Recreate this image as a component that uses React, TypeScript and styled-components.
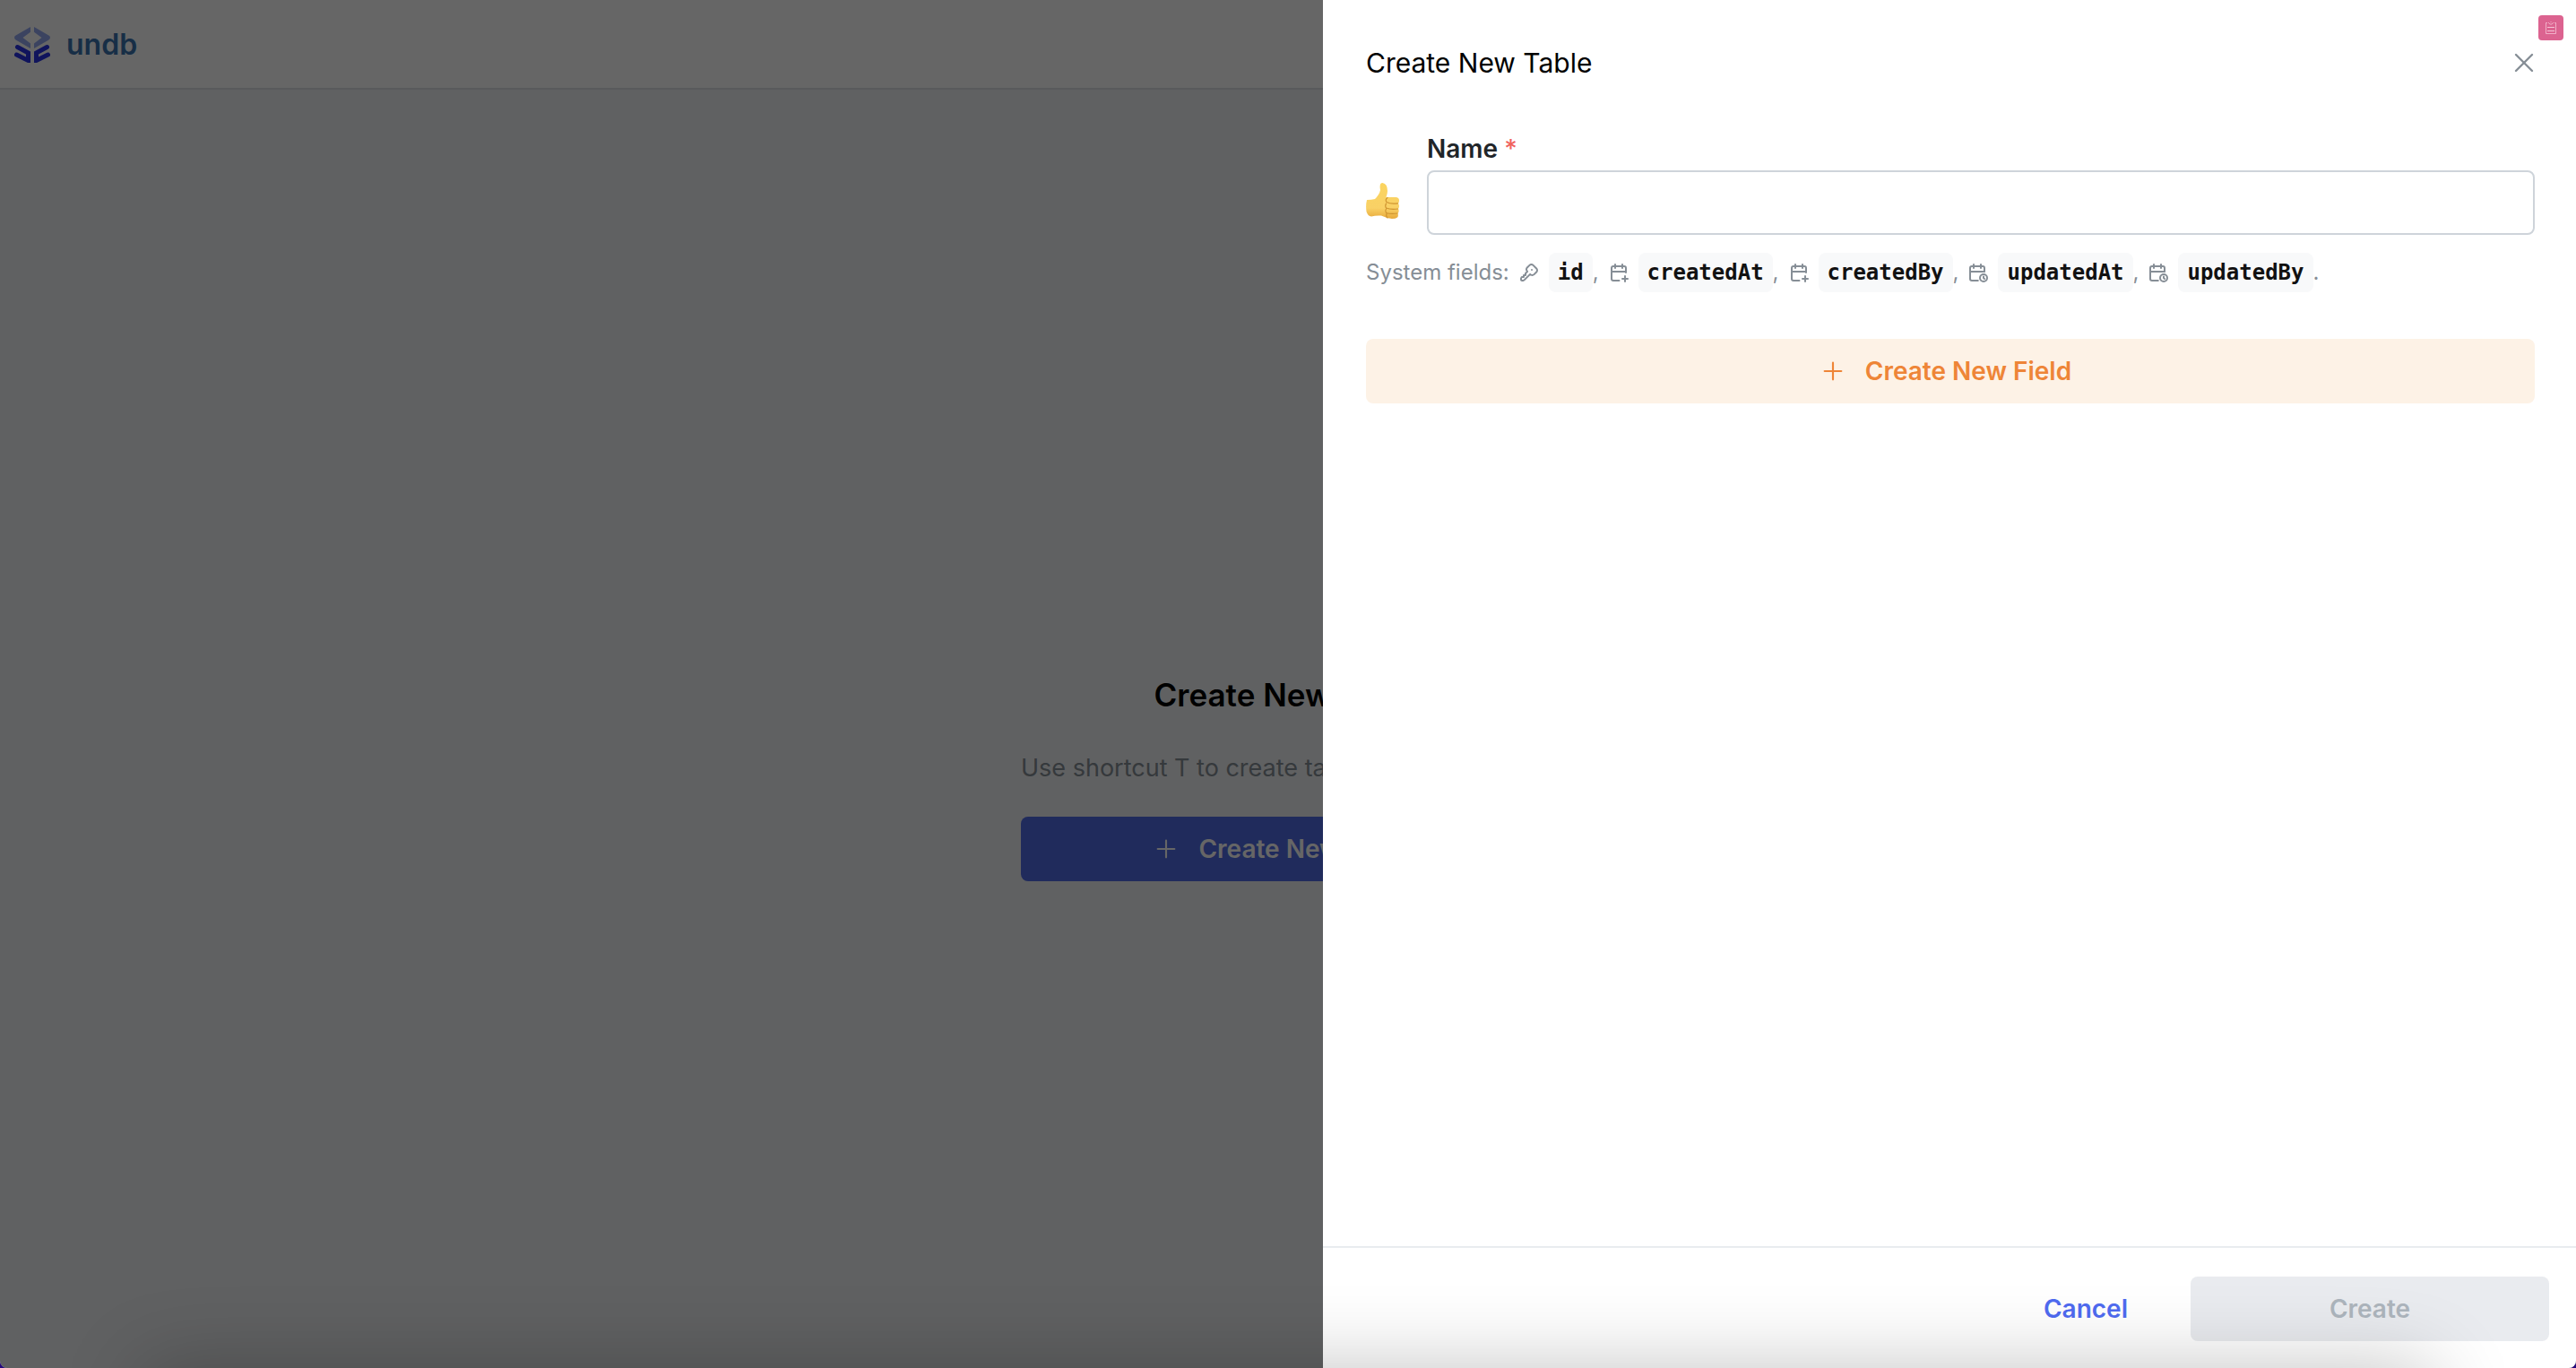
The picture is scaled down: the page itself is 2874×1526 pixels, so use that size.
import React, { useState } from "react";
import styled, { createGlobalStyle } from "styled-components";
import { TbCalendarPlus, TbCalendarTime, TbKey, TbPlus, TbX } from "react-icons/tb";

const GlobalStyle = createGlobalStyle`
  *, *::before, *::after { box-sizing: border-box; }
  body {
    margin: 0;
    background: #260a7c;
    font-family: Inter, "Liberation Sans", sans-serif;
    font-size: 28px;
    color: #000;
  }
`;

const Window = styled.div`
  position: relative;
  display: flex;
  min-height: 100vh;
  overflow: hidden;
  background: #f1f3f5;
  border-radius: 0 0 8px 8px;
`;

const Page = styled.div`
  flex: 1;
  display: flex;
  flex-direction: column;
`;

const TopBar = styled.header`
  display: flex;
  align-items: center;
  gap: 18px;
  height: 100px;
  padding: 2px 16px 0;
  background: #fff;
  border-bottom: 2px solid #dee2e6;
`;

const Brand = styled.span`
  font-size: 32px;
  font-weight: 600;
  line-height: 40px;
  color: #3b73b0;
`;

const Empty = styled.main`
  flex: 1;
  display: flex;
  flex-direction: column;
  align-items: center;
  justify-content: center;
  padding-top: 108px;
`;

const EmptyBox = styled.section`
  display: flex;
  flex-direction: column;
  gap: 32px;
  width: 596px;
`;

const EmptyTitle = styled.h2`
  margin: 0 0 4px;
  font-size: 35px;
  font-weight: 600;
  line-height: 48px;
  text-align: center;
`;

const EmptyText = styled.p`
  margin: 0;
  font-size: 27px;
  line-height: 44px;
  color: #868e96;
`;

const Button = styled.button<{ $bg: string; $fg: string; $width?: string; $icon?: boolean }>`
  display: flex;
  align-items: center;
  justify-content: center;
  gap: 20px;
  height: 72px;
  width: ${(p) => p.$width ?? "auto"};
  padding: ${(p) => (p.$icon ? "0 36px 0 24px" : "0 36px")};
  border: 0;
  border-radius: 8px;
  background: ${(p) => p.$bg};
  color: ${(p) => p.$fg};
  font: inherit;
  font-size: 28px;
  font-weight: 600;
  line-height: 40px;
  svg { width: 32px; height: 32px; stroke-width: 1.6; }
`;

const Overlay = styled.div`
  position: absolute;
  inset: 0;
  background: rgba(0, 0, 0, 0.6);
`;

const Drawer = styled.aside`
  position: absolute;
  top: 0;
  right: 0;
  bottom: 0;
  width: 1398px;
  max-width: 100%;
  display: flex;
  flex-direction: column;
  background: #fff;
`;

const DrawerHeader = styled.div`
  display: flex;
  align-items: center;
  justify-content: space-between;
  padding: 48px 40px 0 48px;
`;

const DrawerTitle = styled.h1`
  margin: 0;
  font-size: 30px;
  font-weight: 400;
  line-height: 44px;
`;

const CloseButton = styled.button`
  display: flex;
  padding: 0;
  border: 0;
  background: none;
  color: #868e96;
  svg { width: 36px; height: 36px; stroke-width: 1.6; }
`;

const Form = styled.form`
  flex: 1;
  display: flex;
  flex-direction: column;
`;

const Fields = styled.div`
  flex: 1;
  padding: 52px 46px 0 48px;
`;

const NameRow = styled.div`
  display: flex;
  align-items: flex-end;
  gap: 28px;
`;

const EmojiButton = styled.button`
  display: flex;
  align-items: center;
  height: 72px;
  padding: 0 0 4px;
  border: 0;
  background: none;
  svg { width: 40px; height: 44px; }
`;

const NameField = styled.div`
  flex: 1;
  display: flex;
  flex-direction: column;
  gap: 2px;
`;

const Label = styled.label`
  font-size: 28px;
  font-weight: 600;
  line-height: 44px;
  color: #212529;
`;

const Required = styled.span`
  color: #f0625d;
  font-weight: 500;
`;

const TextInput = styled.input`
  width: 100%;
  height: 72px;
  padding: 0 24px;
  border: 2px solid #ced4da;
  border-radius: 8px;
  background: #fff;
  font: inherit;
  outline: 0;
`;

const SystemFields = styled.div`
  display: flex;
  align-items: center;
  margin: 20px 0 52px;
  font-size: 24px;
  line-height: 44px;
  color: #868e96;
`;

const SystemField = styled.span`
  display: flex;
  align-items: center;
  padding-left: 10px;
  svg { width: 24px; height: 24px; margin-right: 10px; }
`;

const Code = styled.code`
  padding: 0 10px;
  border-radius: 8px;
  background: #f8f9fa;
  color: #111;
  font-family: "DejaVu Sans Mono", monospace;
  font-size: 24px;
  font-weight: 700;
`;

const Footer = styled.footer`
  display: flex;
  justify-content: flex-end;
  gap: 34px;
  padding: 32px 30px 30px;
  border-top: 2px solid #e9ecef;
`;

const Badge = styled.button`
  position: absolute;
  top: 17px;
  right: 14px;
  display: flex;
  align-items: center;
  justify-content: center;
  width: 28px;
  height: 28px;
  padding: 0;
  border: 0;
  border-radius: 4px;
  background: #dc6390;
`;

const BottomShade = styled.div`
  position: absolute;
  top: 100%;
  left: 160px;
  right: 160px;
  height: 100px;
  box-shadow: 0 0 90px rgba(0, 0, 0, 0.24);
  pointer-events: none;
`;

const Logo = () => (
  <svg width="40" height="40" viewBox="0 0 40 40" aria-hidden="true">
    <g fill="#94a9f0">
      <path d="M18 0 1.600 9.600Q0 10.600 0 12t1.600 2.400L18 24v-5.600L9.500 12 18 5.800Z" />
      <path d="M22 0 38.400 9.600Q40 10.600 40 12t-1.600 2.400L22 24v-5.600L30.500 12 22 5.800Z" />
    </g>
    <g fill="none" stroke="#2832e6" strokeWidth="5" strokeLinecap="round">
      <path d="M3.500 22.500 15.500 29v8.500L2.500 31" />
      <path d="M36.500 22.500 24.500 29v8.500L37.500 31" />
    </g>
  </svg>
);

const ThumbsUp = () => (
  <svg viewBox="0 0 40 44" aria-hidden="true">
    <defs>
      <linearGradient id="skin" x1="0" y1="0" x2="0" y2="1">
        <stop offset="0" stopColor="#fbd45f" />
        <stop offset="0.7" stopColor="#f9d166" />
        <stop offset="1" stopColor="#e7a93a" />
      </linearGradient>
    </defs>
    <path
      fill="url(#skin)"
      d="M1 21Q6 21 10 20 15 15 16 10 14.500 2 18.500 2 24 3 24 11 24 14 22.500 18H33Q37 18 37 21.500 37 23.500 36 25 38 28 36 31 37.500 33.500 35.500 36 36.500 39 35 40.500 33 42 29 42 22 41 17 38.500 11 38 6 39.500 2 39 .5 34 -.5 27 1 21Z"
    />
    <g fill="none" stroke="#cf9430" strokeWidth="1.200" strokeLinecap="round">
      <path d="M24 18.500q-3 2-1 5 5 2.500 12.500 1.300M22.500 25q-1.500 3 0 5 5 2 13 1M22.500 31q-1.500 2 0 4.500 5 1.500 12.500.5M23 36.500q-1 3 1 4.500" />
    </g>
  </svg>
);

const Clipboard = () => (
  <svg width="14" height="16" viewBox="0 0 14 16" fill="none" stroke="#f6c3d6" aria-hidden="true">
    <path d="M3 2.500H1.500v12h11v-12H11M4 2l2 2h2l2-2M7 1v1" strokeWidth="0.800" />
    <path d="M3 7.500h8M3 11.500h8" />
  </svg>
);

const systemFields = [
  { name: "id", Icon: TbKey },
  { name: "createdAt", Icon: TbCalendarPlus },
  { name: "createdBy", Icon: TbCalendarPlus },
  { name: "updatedAt", Icon: TbCalendarTime },
  { name: "updatedBy", Icon: TbCalendarTime },
];

export default function App() {
  const [name, setName] = useState("");

  return (
    <>
      <GlobalStyle />
      <Window>
        <Page>
          <TopBar>
            <Logo />
            <Brand>undb</Brand>
          </TopBar>
          <Empty>
            <EmptyBox>
              <EmptyTitle>Create New Table</EmptyTitle>
              <EmptyText>Use shortcut T to create table</EmptyText>
              <Button type="button" $bg="#506be6" $fg="#fff" $icon>
                <TbPlus />
                Create New Table
              </Button>
            </EmptyBox>
          </Empty>
        </Page>
        <Overlay />
        <Drawer role="dialog" aria-labelledby="drawer-title">
          <DrawerHeader>
            <DrawerTitle id="drawer-title">Create New Table</DrawerTitle>
            <CloseButton type="button" aria-label="Close">
              <TbX />
            </CloseButton>
          </DrawerHeader>
          <Form onSubmit={(e) => e.preventDefault()}>
            <Fields>
              <NameRow>
                <EmojiButton type="button" aria-label="Choose emoji">
                  <ThumbsUp />
                </EmojiButton>
                <NameField>
                  <Label htmlFor="table-name">
                    Name <Required>*</Required>
                  </Label>
                  <TextInput id="table-name" value={name} onChange={(e) => setName(e.target.value)} />
                </NameField>
              </NameRow>
              <SystemFields>
                System fields:
                {systemFields.map(({ name: field, Icon }, i) => (
                  <SystemField key={field}>
                    <Icon />
                    <Code>{field}</Code>
                    {i < systemFields.length - 1 ? "," : "."}
                  </SystemField>
                ))}
              </SystemFields>
              <Button type="button" $bg="#fdf2e6" $fg="#ee8537" $width="100%" $icon>
                <TbPlus />
                Create New Field
              </Button>
            </Fields>
            <Footer>
              <Button type="button" $bg="transparent" $fg="#4f6bf0">
                Cancel
              </Button>
              <Button type="submit" disabled $bg="#e9ebef" $fg="#adb5bd" $width="400px">
                Create
              </Button>
            </Footer>
          </Form>
          <Badge type="button" aria-label="Clipboard">
            <Clipboard />
          </Badge>
        </Drawer>
        <BottomShade />
      </Window>
    </>
  );
}
